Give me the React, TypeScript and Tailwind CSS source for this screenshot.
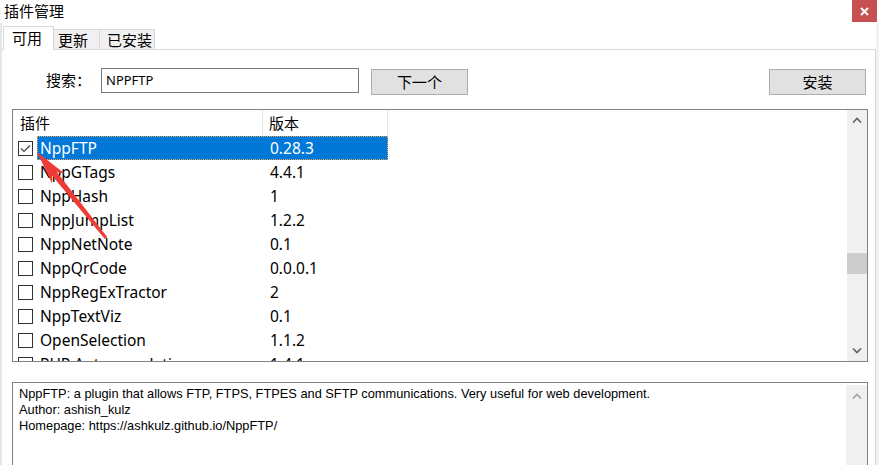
import React from "react";

const rows: { name: string; ver: string; sel?: boolean }[] = [
  { name: "NppFTP", ver: "0.28.3", sel: true },
  { name: "NppGTags", ver: "4.4.1" },
  { name: "NppHash", ver: "1" },
  { name: "NppJumpList", ver: "1.2.2" },
  { name: "NppNetNote", ver: "0.1" },
  { name: "NppQrCode", ver: "0.0.0.1" },
  { name: "NppRegExTractor", ver: "2" },
  { name: "NppTextViz", ver: "0.1" },
  { name: "OpenSelection", ver: "1.1.2" },
  { name: "PHP Autocompletion", ver: "1.4.1" },
];

const cjk = { fontFamily: '"Noto Sans CJK SC", "Noto Sans", sans-serif' };
const ui = { fontFamily: '"Noto Sans", "Noto Sans CJK SC", sans-serif' };

function Up({ color }: { color: string }) {
  return (
    <svg width="10" height="6" viewBox="0 0 10 6">
      <polyline points="1,5.5 5,1.5 9,5.5" fill="none" stroke={color} strokeWidth="1.6" />
    </svg>
  );
}
function Down({ color }: { color: string }) {
  return (
    <svg width="10" height="6" viewBox="0 0 10 6">
      <polyline points="1,0.5 5,4.5 9,0.5" fill="none" stroke={color} strokeWidth="1.6" />
    </svg>
  );
}

export default function App() {
  return (
    <div className="relative w-[879px] h-[465px] overflow-hidden bg-white flex flex-col text-black" style={cjk}>
      {/* title bar */}
      <div className="h-[23px] flex items-start justify-between shrink-0">
        <div className="pl-[4px] pt-[1px] text-[15px] leading-[20px]">插件管理</div>
        <div className="w-[25px] h-[22px] mr-[2px] bg-[#c75050] flex items-center justify-center">
          <svg width="9" height="9" viewBox="0 0 9 9">
            <path d="M1 1 L8 8 M8 1 L1 8" stroke="#fff" strokeWidth="2" />
          </svg>
        </div>
      </div>

      {/* main */}
      <div className="flex-1 flex flex-col border-l-2 border-r-[3px] border-l-[#e6e6e6] border-r-[#f1f1f1]">
        {/* tabs */}
        <div className="relative z-10 flex items-end h-[24px] mt-[3px] ml-[1px] -mb-px">
          <div className="w-[51px] h-[24px] bg-white border border-b-0 border-[#d9d9d9] text-[15px] leading-[22px] pl-[8px]">可用</div>
          <div className="w-[46px] h-[21px] bg-[#f0f0f0] border-t border-r border-b border-[#d9d9d9] text-[15px] leading-[19px] pl-[4px]">更新</div>
          <div className="w-[55px] h-[21px] bg-[#f0f0f0] border-t border-r border-b border-[#d9d9d9] text-[15px] leading-[19px] pl-[7px]">已安装</div>
        </div>

        {/* panel */}
        <div className="flex-1 flex flex-col bg-white border-t border-r border-[#d9d9d9]">
          {/* search row */}
          <div className="flex items-start mt-[18px] pl-[44px] pr-[9px] h-[27px]">
            <div className="w-[55px] text-[15px] leading-[23px]">搜索：</div>
            <div className="w-[258px] h-[25px] border border-[#7a7a7a] pl-[4px] text-[13px] leading-[23px]" style={ui}>
              NPPFTP
            </div>
            <div className="ml-[12px] mt-[1px] w-[97px] h-[26px] bg-[#e1e1e1] border border-[#adadad] flex items-center justify-center text-[15px]">
              下一个
            </div>
            <div className="ml-auto mt-[1px] w-[97px] h-[26px] bg-[#e1e1e1] border border-[#adadad] flex items-center justify-center text-[15px]">
              安装
            </div>
          </div>

          {/* list */}
          <div className="mt-[14px] ml-[10px] w-[856px] h-[253px] border border-[#828282] flex overflow-hidden shrink-0">
            <div className="flex-1 flex flex-col overflow-hidden">
              <div className="h-[26px] flex shrink-0 text-[15px]">
                <div className="w-[250px] border-r border-[#e5e5e5] pl-[7px] leading-[26px]">插件</div>
                <div className="w-[125px] border-r border-[#e5e5e5] pl-[6px] leading-[26px]">版本</div>
              </div>
              {rows.map((r) => (
                <div key={r.name} className="h-[24px] flex items-center shrink-0 text-[15.5px]" style={ui}>
                  <div className="ml-[5px] w-[15px] h-[15px] border border-[#333] bg-white flex items-center justify-center">
                    {r.sel && (
                      <svg width="11" height="9" viewBox="0 0 11 9">
                        <polyline points="1,4.5 4,7.5 10,1.5" fill="none" stroke="#444" strokeWidth="1.2" />
                      </svg>
                    )}
                  </div>
                  <div
                    className={
                      "ml-[4px] w-[351px] h-[24px] flex items-center pt-[2px] " +
                      (r.sel ? "bg-[#0078d7] text-white border border-dotted border-[#e9a35a]" : "")
                    }
                  >
                    <div className={r.sel ? "w-[225px] pl-[2px]" : "w-[226px] pl-[3px]"}>{r.name}</div>
                    <div className="pl-[7px]">{r.ver}</div>
                  </div>
                </div>
              ))}
            </div>
            <div className="w-[20px] bg-[#f0f0f0] relative flex flex-col items-center">
              <div className="h-[20px] flex items-center justify-center">
                <Up color="#606060" />
              </div>
              <div className="absolute left-0 top-[143px] w-[20px] h-[21px] bg-[#cdcdcd]" />
              <div className="mt-auto h-[20px] flex items-center justify-center">
                <Down color="#606060" />
              </div>
            </div>
          </div>

          {/* description */}
          <div className="mt-[20px] ml-[10px] w-[856px] h-[100px] border border-[#828282] flex shrink-0">
            <div
              className="flex-1 pl-[6px] pt-[3px] text-[12.8px] leading-[16px]"
              style={{ fontFamily: '"Liberation Sans", Arial, sans-serif' }}
            >
              <div>NppFTP: a plugin that allows FTP, FTPS, FTPES and SFTP communications. Very useful for web development.</div>
              <div>Author: ashish_kulz</div>
              <div>Homepage: https://ashkulz.github.io/NppFTP/</div>
            </div>
            <div className="w-[21px] mt-[2px] bg-[#f0f0f0] flex flex-col items-center">
              <div className="h-[22px] flex items-center justify-center">
                <Up color="#a3a3a3" />
              </div>
            </div>
          </div>
        </div>
      </div>

      {/* red annotation arrow */}
      <svg className="absolute left-0 top-0 pointer-events-none" width="879" height="465" viewBox="0 0 879 465">
        <polygon
          points="37,152 64.5,173.5 56.8,171.9 107.2,237.1 104.8,238.9 52.2,175.7 52.1,183.5"
          fill="#ee3b36"
        />
      </svg>
    </div>
  );
}
